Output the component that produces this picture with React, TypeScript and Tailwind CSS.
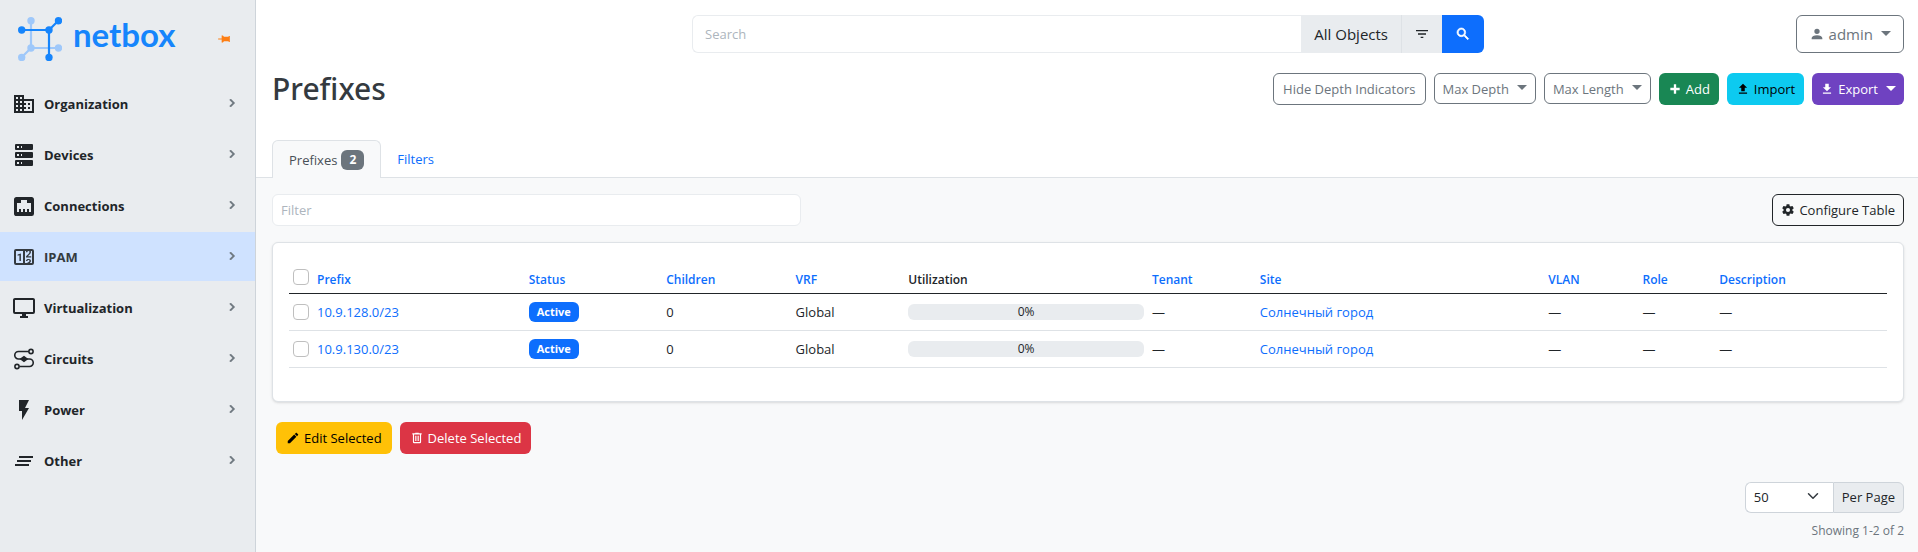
import React from "react";

const icons = {
  domain:
    "M18,15H16V17H18M18,11H16V13H18M20,19H12V17H14V15H12V13H14V11H12V9H20M10,7H8V5H10M10,11H8V9H10M10,15H8V13H10M10,19H8V17H10M6,7H4V5H6M6,11H4V9H6M6,15H4V13H6M6,19H4V17H6M12,7V3H2V21H22V7H12Z",
  server:
    "M4,1H20A1,1 0 0,1 21,2V6A1,1 0 0,1 20,7H4A1,1 0 0,1 3,6V2A1,1 0 0,1 4,1M4,9H20A1,1 0 0,1 21,10V14A1,1 0 0,1 20,15H4A1,1 0 0,1 3,14V10A1,1 0 0,1 4,9M4,17H20A1,1 0 0,1 21,18V22A1,1 0 0,1 20,23H4A1,1 0 0,1 3,22V18A1,1 0 0,1 4,17M9,5H10V3H9V5M9,13H10V11H9V13M9,21H10V19H9V21M5,3V5H7V3H5M5,11V13H7V11H5M5,19V21H7V19H5Z",
  ethernet:
    "M7,15H9V18H11V15H13V18H15V15H17V18H19V9H15V6H9V9H5V18H7V15M4.38,3H19.63C20.94,3 22,4.06 22,5.38V19.63A2.37,2.37 0 0,1 19.63,22H4.38C3.06,22 2,20.94 2,19.63V5.38C2,4.06 3.06,3 4.38,3Z",
  counter:
    "M4,4H20A2,2 0 0,1 22,6V18A2,2 0 0,1 20,20H4A2,2 0 0,1 2,18V6A2,2 0 0,1 4,4M4,6V18H11V6H4M20,18V6H18.76C19,6.54 18.95,7.07 18.95,7.13C18.88,7.8 18.41,8.5 18.24,8.75L15.91,11.3L19.23,11.28L19.24,12.5L14.04,12.47L14,11.47C14,11.47 17.05,8.24 17.2,7.95C17.34,7.67 17.91,6 16.5,6C15.27,6.05 15.41,7.3 15.41,7.3L13.87,7.31C13.87,7.31 13.88,6.65 14.25,6H13V18H15.58L15.57,17.14L16.54,17.13C16.54,17.13 17.45,16.97 17.46,16.08C17.5,15.08 16.65,15.08 16.5,15.08C16.37,15.08 15.43,15.13 15.43,15.95H13.91C13.91,15.95 13.95,13.89 16.5,13.89C19.1,13.89 18.96,15.91 18.96,15.91C18.96,15.91 19,17.16 17.85,17.63L18.37,18H20M8.92,16H7.42V10.2L5.62,10.76V9.53L8.76,8.41H8.92V16Z",
  monitor:
    "M21,16H3V4H21M21,2H3C1.89,2 1,2.89 1,4V16A2,2 0 0,0 3,18H10V20H8V22H16V20H14V18H21A2,2 0 0,0 23,16V4C23,2.89 22.1,2 21,2Z",
  flash: "M7,2V13H10V22L17,10H13L17,2H7Z",
  clearAll: "M5,13H19V11H5M3,17H17V15H3M7,7V9H21V7",
  chevron: "M8.59,16.58L13.17,12L8.59,7.41L10,6L16,12L10,18L8.59,16.58Z",
  pin: "M16,12V4H17V2H7V4H8V12L6,14V16H11.2V22H12.8V16H18V14L16,12Z",
  filter: "M6,13H18V11H6M3,6V8H21V6M10,18H14V16H10V18Z",
  magnify:
    "M9.5,3A6.5,6.5 0 0,1 16,9.5C16,11.11 15.41,12.59 14.44,13.73L14.71,14H15.5L20.5,19L19,20.5L14,15.5V14.71L13.73,14.44C12.59,15.41 11.11,16 9.5,16A6.5,6.5 0 0,1 3,9.5A6.5,6.5 0 0,1 9.5,3M9.5,5C7,5 5,7 5,9.5C5,12 7,14 9.5,14C12,14 14,12 14,9.5C14,7 12,5 9.5,5Z",
  account:
    "M12,4A4,4 0 0,1 16,8A4,4 0 0,1 12,12A4,4 0 0,1 8,8A4,4 0 0,1 12,4M12,14C16.42,14 20,15.79 20,18V20H4V18C4,15.79 7.58,14 12,14Z",
  plus: "M20 14H14V20H10V14H4V10H10V4H14V10H20V14Z",
  upload: "M9,16V10H5L12,3L19,10H15V16H9M5,20V18H19V20H5Z",
  download: "M5,20H19V18H5M19,9H15V3H9V9H5L12,16L19,9Z",
  cog: "M12,15.5A3.5,3.5 0 0,1 8.5,12A3.5,3.5 0 0,1 12,8.5A3.5,3.5 0 0,1 15.5,12A3.5,3.5 0 0,1 12,15.5M19.43,12.97C19.47,12.65 19.5,12.33 19.5,12C19.5,11.67 19.47,11.34 19.43,11L21.54,9.37C21.73,9.22 21.78,8.95 21.66,8.73L19.66,5.27C19.54,5.05 19.27,4.96 19.05,5.05L16.56,6.05C16.04,5.66 15.5,5.32 14.87,5.07L14.5,2.42C14.46,2.18 14.25,2 14,2H10C9.75,2 9.54,2.18 9.5,2.42L9.13,5.07C8.5,5.32 7.96,5.66 7.44,6.05L4.95,5.05C4.73,4.96 4.46,5.05 4.34,5.27L2.34,8.73C2.21,8.95 2.27,9.22 2.46,9.37L4.57,11C4.53,11.34 4.5,11.67 4.5,12C4.5,12.33 4.53,12.65 4.57,12.97L2.46,14.63C2.27,14.78 2.21,15.05 2.34,15.27L4.34,18.73C4.46,18.95 4.73,19.03 4.95,18.95L7.44,17.94C7.96,18.34 8.5,18.68 9.13,18.93L9.5,21.58C9.54,21.82 9.75,22 10,22H14C14.25,22 14.46,21.82 14.5,21.58L14.87,18.93C15.5,18.67 16.04,18.34 16.56,17.94L19.05,18.95C19.27,19.03 19.54,18.95 19.66,18.73L21.66,15.27C21.78,15.05 21.73,14.78 21.54,14.63L19.43,12.97Z",
  pencil:
    "M20.71,7.04C21.1,6.65 21.1,6 20.71,5.63L18.37,3.29C18,2.9 17.35,2.9 16.96,3.29L15.12,5.12L18.87,8.87M3,17.25V21H6.75L17.81,9.93L14.06,6.18L3,17.25Z",
  trash:
    "M9,3V4H4V6H5V19A2,2 0 0,0 7,21H17A2,2 0 0,0 19,19V6H20V4H15V3H9M7,6H17V19H7V6M9,8V17H11V8H9M13,8V17H15V8H13Z",
};

type IconName = keyof typeof icons;

function Icon({ name, className }: { name: IconName; className: string }) {
  return (
    <svg viewBox="0 0 24 24" fill="currentColor" className={className} aria-hidden="true">
      <path d={icons[name]} />
    </svg>
  );
}

function CircuitIcon({ className }: { className: string }) {
  return (
    <svg viewBox="0 0 24 24" fill="none" stroke="currentColor" strokeWidth="1.6" className={className} aria-hidden="true">
      <path d="M17 4.5H6.5a3.75 3.75 0 0 0 0 7.5h11a3.75 3.75 0 0 1 0 7.5H7.5" />
      <circle cx="19" cy="4.5" r="2.1" />
      <circle cx="5" cy="19.5" r="2.1" />
      <path d="M9 12l3-2.2 3 2.2-3 2.2z" fill="currentColor" />
    </svg>
  );
}

function Caret() {
  return <span className="mb-0.5 ml-2 inline-block border-x-5 border-t-5 border-x-transparent border-t-current" />;
}

function Logo() {
  return (
    <svg viewBox="0 0 44 44" className="h-11 w-11" aria-hidden="true">
      <g stroke="#9fc8fa" strokeWidth="2.2" fill="#9fc8fa">
        <path d="M13 4V31H41M13 31L4 40" fill="none" />
        <circle cx="13" cy="3.7" r="2.6" />
        <circle cx="40.5" cy="31" r="2.6" />
        <circle cx="13" cy="31" r="2.6" />
        <circle cx="3.7" cy="40.5" r="2.6" />
      </g>
      <g stroke="#1685fc" strokeWidth="2.2" fill="#1685fc">
        <path d="M4 13H31V40M31 13L40 4" fill="none" />
        <circle cx="3.7" cy="13" r="2.6" />
        <circle cx="31" cy="13" r="2.6" />
        <circle cx="40.5" cy="3.7" r="2.6" />
        <circle cx="31" cy="40.5" r="2.6" />
      </g>
    </svg>
  );
}

const menu: { label: string; icon: IconName | "circuit"; active?: boolean }[] = [
  { label: "Organization", icon: "domain" },
  { label: "Devices", icon: "server" },
  { label: "Connections", icon: "ethernet" },
  { label: "IPAM", icon: "counter", active: true },
  { label: "Virtualization", icon: "monitor" },
  { label: "Circuits", icon: "circuit" },
  { label: "Power", icon: "flash" },
  { label: "Other", icon: "clearAll" },
];

function Sidebar() {
  return (
    <aside className="w-64 shrink-0 border-r border-[#ced4da] bg-[#e9ecef]">
      <div className="flex h-[79px] items-center pr-6 pb-0.5 pl-[18px]">
        <a href="#home" className="flex items-center gap-[11px]">
          <Logo />
          <span className="pb-2.5 font-['Lato',sans-serif] text-[33px] leading-10 font-bold text-[#1685fc]">netbox</span>
        </a>
        <button type="button" aria-label="Pin menu" className="ml-auto text-[#fd7e14]">
          <Icon name="pin" className="h-3.5 w-3.5 rotate-90" />
        </button>
      </div>
      <nav className="flex flex-col gap-0.5">
        {menu.map((item) => (
          <a
            key={item.label}
            href={"#" + item.label.toLowerCase()}
            className={
              item.active
                ? "flex h-[49px] items-center bg-[#cfe2ff] pr-[15px] pl-3 text-[#343a40]"
                : "flex h-[49px] items-center pr-[15px] pl-3 text-[#212529]"
            }
          >
            {item.icon === "circuit" ? (
              <CircuitIcon className="h-6 w-6" />
            ) : (
              <Icon name={item.icon} className="h-6 w-6" />
            )}
            <span className="ml-2 text-[13px] font-bold">{item.label}</span>
            <Icon name="chevron" className="mb-0.5 ml-auto h-4 w-4 stroke-current text-[#6c757d]" />
          </a>
        ))}
      </nav>
    </aside>
  );
}

const columns = [
  { label: "Prefix", width: "w-[13.25%]" },
  { label: "Status", width: "w-[8.6%]" },
  { label: "Children", width: "w-[8.1%]" },
  { label: "VRF", width: "w-[7.05%]" },
  { label: "Utilization", width: "w-[15.25%]", plain: true },
  { label: "Tenant", width: "w-[6.75%]" },
  { label: "Site", width: "w-[18.05%]" },
  { label: "VLAN", width: "w-[5.9%]" },
  { label: "Role", width: "w-[4.8%]" },
  { label: "Description", width: "w-auto" },
];

const rows = ["10.9.128.0/23", "10.9.130.0/23"];

function Check({ label }: { label: string }) {
  return (
    <input
      type="checkbox"
      aria-label={label}
      className="block h-4 w-4 appearance-none rounded border border-[#bfbfbf] bg-white"
    />
  );
}

function PrefixTable() {
  return (
    <table className="w-full table-fixed border-collapse text-left text-[13px] leading-5">
      <thead>
        <tr className="border-b border-[#212529] text-[12px]">
          <th className="h-[35px] w-6 px-1 pb-2 align-bottom">
            <Check label="Select all" />
          </th>
          {columns.map((c) => (
            <th key={c.label} className={c.width + " px-1 pb-[3px] align-bottom font-semibold"}>
              {c.plain ? c.label : <a href="#sort" className="text-[#0d6efd]">{c.label}</a>}
            </th>
          ))}
        </tr>
      </thead>
      <tbody>
        {rows.map((prefix) => (
          <tr key={prefix} className="h-[37px] border-b border-[#dee2e6]">
            <td className="px-1 pt-px">
              <Check label={"Select " + prefix} />
            </td>
            <td className="px-1 pt-px">
              <a href="#prefix" className="text-[#0d6efd]">{prefix}</a>
            </td>
            <td className="px-1 pt-px">
              <span className="block w-fit rounded-md bg-[#0d6efd] px-2 text-[11px] font-bold text-white">Active</span>
            </td>
            <td className="px-1 pt-px">0</td>
            <td className="px-1 pt-px">Global</td>
            <td className="px-1 pt-px">
              <div className="h-4 rounded-md bg-[#e9ecef] text-center text-[12px] leading-4">0%</div>
            </td>
            <td className="px-1 pt-px">—</td>
            <td className="px-1 pt-px">
              <a href="#site" className="text-[#0d6efd]">Солнечный город</a>
            </td>
            <td className="px-1 pt-px">—</td>
            <td className="px-1 pt-px">—</td>
            <td className="px-1 pt-px">—</td>
          </tr>
        ))}
      </tbody>
    </table>
  );
}

export default function App() {
  return (
    <div className="flex min-h-screen bg-[#f8f9fa] font-['Open_Sans','Noto_Sans',sans-serif] text-[13px] leading-5 text-[#212529]">
      <Sidebar />
      <main className="min-w-0 flex-1">
        <div className="border-b border-[#dee2e6] bg-white pr-3.5 pl-4">
          <header className="grid grid-cols-[1fr_792px_1fr] items-center pt-[15px]">
            <form className="col-start-2 flex h-[38px]" onSubmit={(e) => e.preventDefault()}>
              <input
                type="text"
                aria-label="Search"
                placeholder="Search"
                className="min-w-0 flex-1 rounded-l-md border border-r-0 border-[#e9ecef] px-3 placeholder:text-[#adb5bd]"
              />
              <span className="flex items-center border-r border-[#dee2e6] bg-[#e9ecef] px-[13px] text-[15px]">All Objects</span>
              <button type="button" aria-label="Filter objects" className="flex w-10 items-center justify-center bg-[#e9ecef]">
                <Icon name="filter" className="h-4 w-4" />
              </button>
              <button type="submit" aria-label="Run search" className="flex w-[42px] items-center justify-center rounded-r-md bg-[#0d6efd] text-white">
                <Icon name="magnify" className="h-4 w-4 stroke-current" />
              </button>
            </form>
            <button
              type="button"
              className="flex h-[38px] items-center justify-self-end rounded-md border border-[#6c757d] px-3 text-[15px] text-[#6c757d]"
            >
              <Icon name="account" className="mr-1 h-4 w-4" />
              admin
              <Caret />
            </button>
          </header>

          <div className="mt-4 flex items-start justify-between pt-1">
            <h1 className="font-['Noto_Sans',sans-serif] text-[30px] leading-8 font-medium text-[#343a40]">Prefixes</h1>
            <div className="flex items-start gap-2">
              <button type="button" className="h-8 rounded-md border border-[#6c757d] px-[9px] text-[#6c757d]">
                Hide Depth Indicators
              </button>
              <button type="button" className="flex h-[31px] items-center rounded-md border border-[#6c757d] px-2 text-[#6c757d]">
                Max Depth <Caret />
              </button>
              <button type="button" className="flex h-[31px] items-center rounded-md border border-[#6c757d] px-2 text-[#6c757d]">
                Max Length <Caret />
              </button>
              <button type="button" className="flex h-8 items-center gap-1 rounded-md bg-[#198754] px-[9px] text-white">
                <Icon name="plus" className="h-3.5 w-3.5" />
                Add
              </button>
              <button type="button" className="flex h-8 items-center gap-1 rounded-md bg-[#0dcaf0] px-[9px] text-black">
                <Icon name="upload" className="h-3.5 w-3.5" />
                Import
              </button>
              <button type="button" className="flex h-8 items-center rounded-md bg-[#6f42c1] px-2 text-white">
                <Icon name="download" className="mr-1 h-3.5 w-3.5" />
                Export
                <Caret />
              </button>
            </div>
          </div>

          <nav className="mt-[35px] -mb-px flex">
            <a
              href="#prefixes"
              className="flex h-[38px] items-center gap-1 rounded-t-md border border-b-0 border-[#dee2e6] bg-[#f8f9fa] px-4 text-[#495057]"
            >
              Prefixes
              <span className="rounded-md bg-[#6c757d] px-2 text-[12px] font-bold text-white">2</span>
            </a>
            <a href="#filters" className="flex h-[38px] items-center px-4 text-[#0d6efd]">
              Filters
            </a>
          </nav>
        </div>

        <div className="pt-4 pr-3.5 pl-4">
          <div className="flex justify-between">
            <input
              type="text"
              aria-label="Filter"
              placeholder="Filter"
              className="h-8 w-[32.4%] rounded-md border border-[#e9ecef] bg-white px-2 placeholder:text-[#adb5bd]"
            />
            <button type="button" className="flex h-8 items-center gap-1 rounded-md border border-[#212529] px-2">
              <Icon name="cog" className="h-3.5 w-3.5" />
              Configure Table
            </button>
          </div>

          <section className="mt-4 rounded-md border border-[#dee2e6] bg-white px-4 pt-[15px] pb-[33px] shadow-sm">
            <PrefixTable />
          </section>

          <div className="mt-5 flex gap-2 pl-1">
            <button type="button" className="flex h-8 items-center gap-1 rounded-md bg-[#ffc107] px-2.5 text-black">
              <Icon name="pencil" className="h-3.5 w-3.5" />
              Edit Selected
            </button>
            <button type="button" className="flex h-8 items-center gap-1 rounded-md bg-[#dc3545] px-2.5 text-white">
              <Icon name="trash" className="h-3.5 w-3.5" />
              Delete Selected
            </button>
          </div>

          <div className="mt-7 flex flex-col items-end">
            <div className="flex h-[31px]">
              <div className="relative">
                <select
                  id="per-page"
                  defaultValue="50"
                  className="h-full w-[88px] appearance-none rounded-l-md border border-r-0 border-[#ced4da] bg-white pl-2"
                >
                  <option>25</option>
                  <option>50</option>
                  <option>100</option>
                </select>
                <svg
                  viewBox="0 0 16 16"
                  fill="none"
                  stroke="#343a40"
                  strokeWidth="2"
                  strokeLinecap="round"
                  strokeLinejoin="round"
                  className="pointer-events-none absolute top-2 right-3 h-3 w-4"
                  aria-hidden="true"
                >
                  <path d="M2 5l6 6 6-6" />
                </svg>
              </div>
              <label htmlFor="per-page" className="flex items-center rounded-r-md border border-[#ced4da] bg-[#e9ecef] px-2">
                Per Page
              </label>
            </div>
            <p className="mt-2 text-[12px] leading-5 text-[#6c757d]">Showing 1-2 of 2</p>
          </div>
        </div>
      </main>
    </div>
  );
}
